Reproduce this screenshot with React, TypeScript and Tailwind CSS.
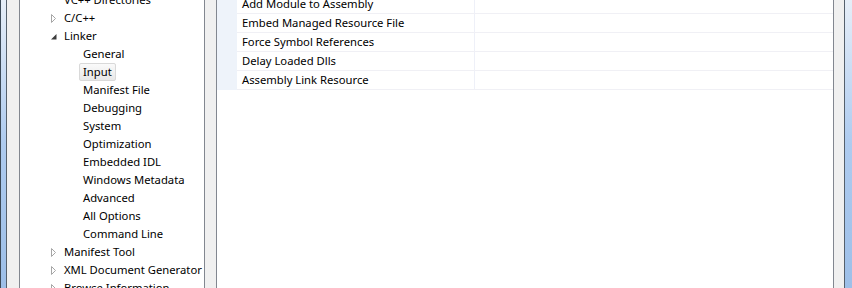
const tree: { label: string; level: 1 | 2; state?: 'open' | 'closed'; selected?: boolean }[] = [
  { label: 'VC++ Directories', level: 1 },
  { label: 'C/C++', level: 1, state: 'closed' },
  { label: 'Linker', level: 1, state: 'open' },
  { label: 'General', level: 2 },
  { label: 'Input', level: 2, selected: true },
  { label: 'Manifest File', level: 2 },
  { label: 'Debugging', level: 2 },
  { label: 'System', level: 2 },
  { label: 'Optimization', level: 2 },
  { label: 'Embedded IDL', level: 2 },
  { label: 'Windows Metadata', level: 2 },
  { label: 'Advanced', level: 2 },
  { label: 'All Options', level: 2 },
  { label: 'Command Line', level: 2 },
  { label: 'Manifest Tool', level: 1, state: 'closed' },
  { label: 'XML Document Generator', level: 1, state: 'closed' },
  { label: 'Browse Information', level: 1, state: 'closed' },
]

const props = [
  'Add Module to Assembly',
  'Embed Managed Resource File',
  'Force Symbol References',
  'Delay Loaded Dlls',
  'Assembly Link Resource',
]

function Arrow({ state }: { state?: 'open' | 'closed' }) {
  if (state === 'closed') {
    return (
      <svg width="6" height="9" viewBox="0 0 6 9" className="mt-[5px]">
        <path d="M0.5 0.5 L4.5 4.5 L0.5 8.5 Z" fill="none" stroke="#a6a6a6" strokeWidth="1" />
      </svg>
    )
  }
  if (state === 'open') {
    return (
      <svg width="6" height="9" viewBox="0 0 6 9" className="mt-[5px]">
        <path d="M5.5 2 L5.5 7.5 L0 7.5 Z" fill="#3c3c3c" />
      </svg>
    )
  }
  return <span className="w-[6px]" />
}

export default function App() {
  return (
    <div
      className="w-[852px] h-[288px] overflow-hidden flex bg-white text-[11.25px] text-black"
      style={{ fontFamily: '"Noto Sans", "Open Sans", sans-serif' }}
    >
      {/* left window frame */}
      <div className="w-px bg-[#3c4a58]" />
      <div className="w-[5px] bg-gradient-to-b from-[#e6eef8] via-[#aecbef] to-[#9dbfe8]" />
      <div className="w-px bg-[#55606c]" />
      <div className="w-[12px] bg-[#f0f0f0]" />

      {/* category tree */}
      <div className="w-[186px] border-x border-[#828790] bg-white overflow-hidden">
        <div className="-mt-[9px]">
          {tree.map((t) => (
            <div key={t.label} className="h-[18px] flex items-start leading-[18px] whitespace-nowrap">
              {t.level === 1 ? (
                <div className="flex items-start pl-[31px]">
                  <div className="w-[13px] flex">
                    <Arrow state={t.state} />
                  </div>
                  <span>{t.label}</span>
                </div>
              ) : (
                <div className="pl-[63px]">
                  <span
                    className={
                      t.selected
                        ? 'block h-[18px] px-[3px] -ml-[4px] border border-[#d9d9d9] rounded-[2px] bg-gradient-to-b from-[#fafafa] to-[#e8e8e8] leading-[16px]'
                        : 'block'
                    }
                  >
                    {t.label}
                  </span>
                </div>
              )}
            </div>
          ))}
        </div>
      </div>

      <div className="w-[11px] bg-[#f0f0f0]" />

      {/* property grid */}
      <div className="w-[618px] border-x border-[#828790] bg-white overflow-hidden">
        <div className="-mt-[5px]">
          {props.map((p) => (
            <div key={p} className="h-[19px] flex">
              <div className="w-[20px] bg-[#eef3fa]" />
              <div className="flex-1 flex border-b border-[#f0f0f5]">
                <div className="w-[238px] border-r border-[#eef0f8] pl-[5px] leading-[18px] whitespace-nowrap">{p}</div>
                <div className="flex-1" />
              </div>
            </div>
          ))}
        </div>
      </div>

      {/* right window frame */}
      <div className="w-[10px] bg-[#f0f0f0]" />
      <div className="w-px bg-[#55606c]" />
      <div className="w-[7px] bg-gradient-to-b from-[#e6eef8] via-[#aecbef] to-[#9dbfe8]" />
    </div>
  )
}
